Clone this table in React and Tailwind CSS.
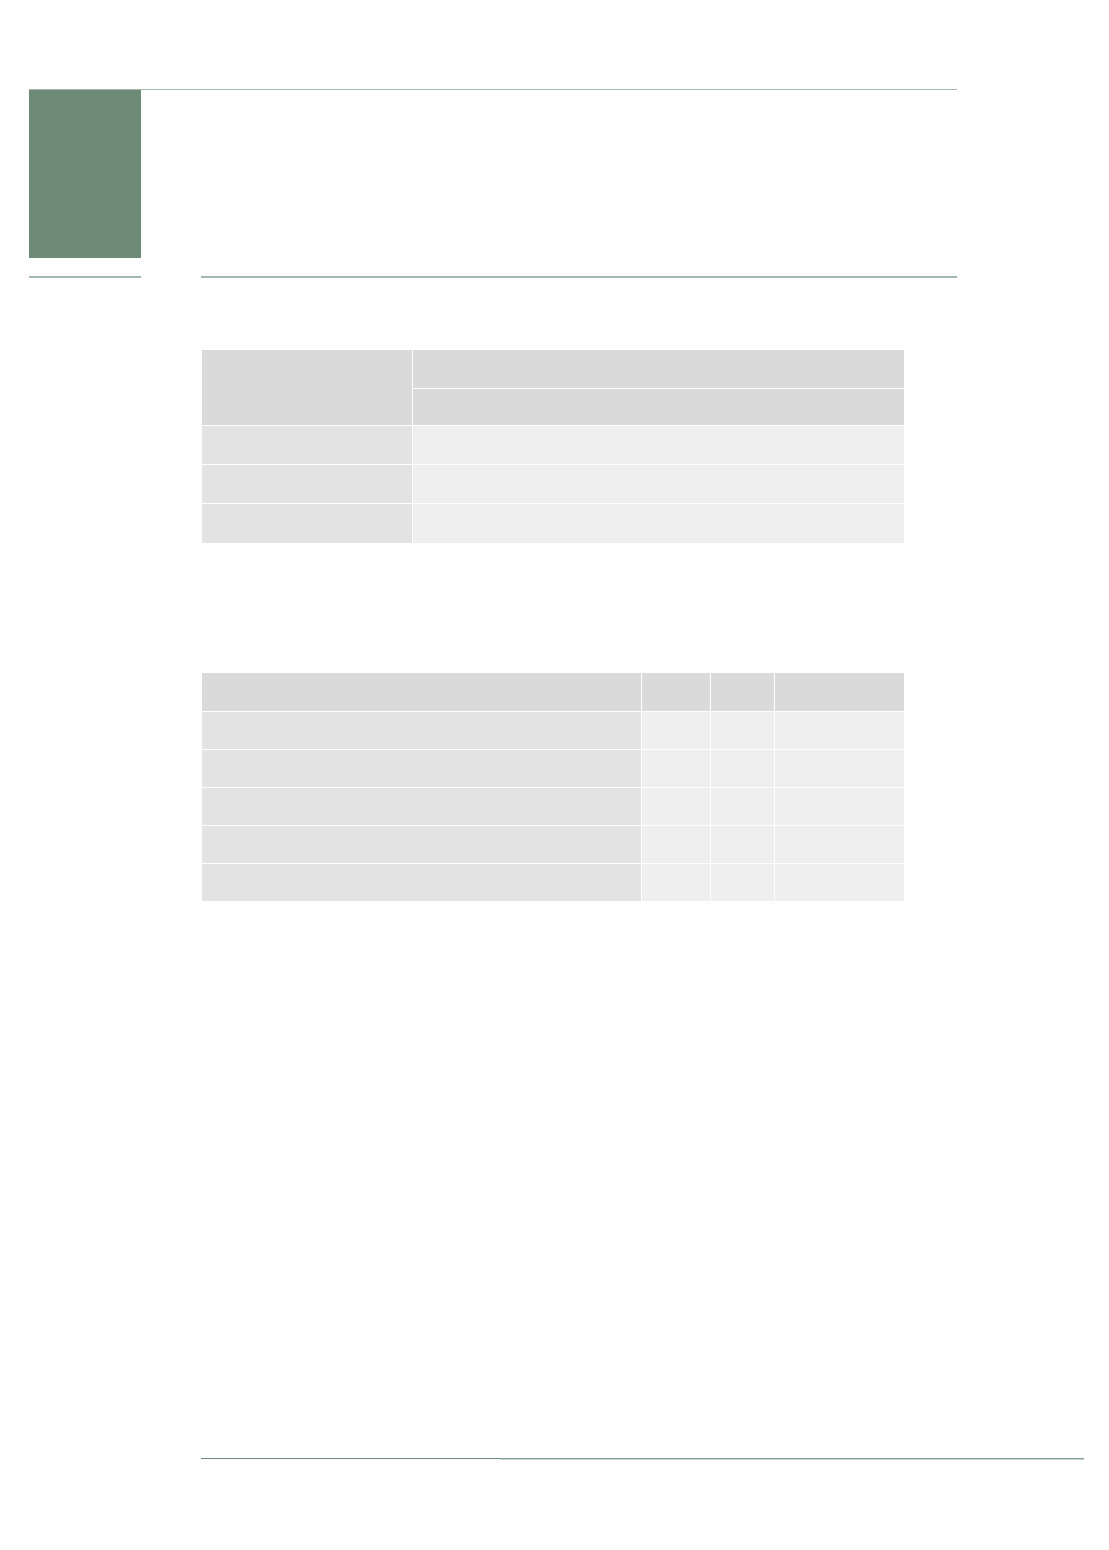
export default function App() {
  const rows2 = [0, 1, 2, 3, 4];
  return (
    <div className="min-h-[1550px] w-[1109px] bg-[#fefefe] pt-[89px]" style={{ fontFamily: '"Liberation Sans", sans-serif' }}>
      <div className="ml-[29px] w-[928px] border-t border-[#a3b8aa]">
        <div className="h-[168px] w-[112px] bg-[#6d8b77]" />
      </div>
      <div className="ml-[29px] mt-[18px] flex w-[928px]">
        <div className="h-[2px] w-[112px] bg-[#a3b8aa]" />
        <div className="ml-[60px] h-[2px] flex-1 bg-[#a3b8aa]" />
      </div>

      <div className="ml-[202px] mt-[72px] grid w-[702px] grid-cols-[210px_1fr] gap-px">
        <div className="row-span-2 bg-[#dadada]" />
        <div className="h-[38px] bg-[#dadada]" />
        <div className="h-[36px] bg-[#dadada]" />
        <div className="h-[38px] bg-[#e3e3e3]" />
        <div className="h-[38px] bg-[#efefef]" />
        <div className="h-[38px] bg-[#e3e3e3]" />
        <div className="h-[38px] bg-[#efefef]" />
        <div className="h-[39px] bg-[#e3e3e3]" />
        <div className="h-[39px] bg-[#efefef]" />
      </div>

      <div className="ml-[202px] mt-[130px] grid w-[702px] grid-cols-[439px_68px_63px_1fr] gap-px">
        <div className="h-[38px] bg-[#dadada]" />
        <div className="h-[38px] bg-[#dadada]" />
        <div className="h-[38px] bg-[#dadada]" />
        <div className="h-[38px] bg-[#dadada]" />
        {rows2.map((r) => (
          <div key={r} className="contents">
            <div className="h-[37px] bg-[#e3e3e3]" />
            <div className="h-[37px] bg-[#efefef]" />
            <div className="h-[37px] bg-[#efefef]" />
            <div className="h-[37px] bg-[#efefef]" />
          </div>
        ))}
      </div>

      <div className="ml-[201px] mt-[557px] flex w-[883px] items-start">
        <div className="h-[1px] w-[299px] bg-[#6d8b77]" />
        <div className="flex-1 border-t border-[#86a190]">
          <div className="h-[1px] bg-[#c3d2c8]" />
        </div>
      </div>
    </div>
  );
}
